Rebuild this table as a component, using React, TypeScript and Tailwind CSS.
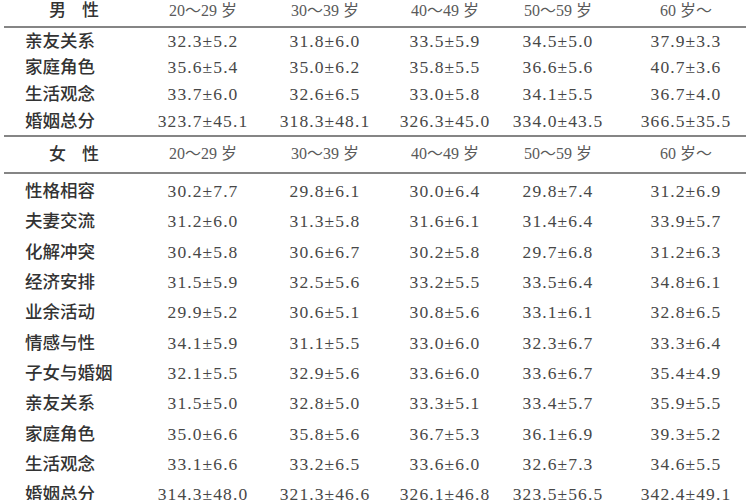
const ages = ["20～29 岁", "30～39 岁", "40～49 岁", "50～59 岁", "60 岁～"];

const male: [string, string[]][] = [
  ["亲友关系", ["32.3±5.2", "31.8±6.0", "33.5±5.9", "34.5±5.0", "37.9±3.3"]],
  ["家庭角色", ["35.6±5.4", "35.0±6.2", "35.8±5.5", "36.6±5.6", "40.7±3.6"]],
  ["生活观念", ["33.7±6.0", "32.6±6.5", "33.0±5.8", "34.1±5.5", "36.7±4.0"]],
  ["婚姻总分", ["323.7±45.1", "318.3±48.1", "326.3±45.0", "334.0±43.5", "366.5±35.5"]],
];

const female: [string, string[]][] = [
  ["性格相容", ["30.2±7.7", "29.8±6.1", "30.0±6.4", "29.8±7.4", "31.2±6.9"]],
  ["夫妻交流", ["31.2±6.0", "31.3±5.8", "31.6±6.1", "31.4±6.4", "33.9±5.7"]],
  ["化解冲突", ["30.4±5.8", "30.6±6.7", "30.2±5.8", "29.7±6.8", "31.2±6.3"]],
  ["经济安排", ["31.5±5.9", "32.5±5.6", "33.2±5.5", "33.5±6.4", "34.8±6.1"]],
  ["业余活动", ["29.9±5.2", "30.6±5.1", "30.8±5.6", "33.1±6.1", "32.8±6.5"]],
  ["情感与性", ["34.1±5.9", "31.1±5.5", "33.0±6.0", "32.3±6.7", "33.3±6.4"]],
  ["子女与婚姻", ["32.1±5.5", "32.9±5.6", "33.6±6.0", "33.6±6.7", "35.4±4.9"]],
  ["亲友关系", ["31.5±5.0", "32.8±5.0", "33.3±5.1", "33.4±5.7", "35.9±5.5"]],
  ["家庭角色", ["35.0±6.6", "35.8±5.6", "36.7±5.3", "36.1±6.9", "39.3±5.2"]],
  ["生活观念", ["33.1±6.6", "33.2±6.5", "33.6±6.0", "32.6±7.3", "34.6±5.5"]],
  ["婚姻总分", ["314.3±48.0", "321.3±46.6", "326.1±46.8", "323.5±56.5", "342.4±49.1"]],
];

const grid = "grid grid-cols-[142px_122px_122px_118px_108px_148px] items-center";

function Rule() {
  return <div className="mx-[4px] h-[2px] bg-[#858585]" />;
}

function Header({ sex, h }: { sex: [string, string]; h: string }) {
  return (
    <div className={`${grid} ${h}`}>
      <div className="flex gap-[16px] pl-[49px] text-[17px] font-medium text-[#333]">
        <span>{sex[0]}</span>
        <span>{sex[1]}</span>
      </div>
      {ages.map((a) => (
        <div key={a} className="text-center text-[16px] text-[#5a5a5a]">
          {a}
        </div>
      ))}
    </div>
  );
}

function Row({ label, vals, h }: { label: string; vals: string[]; h: string }) {
  return (
    <div className={`${grid} ${h}`}>
      <div className="pl-[25px] text-[17.5px] font-medium text-[#333]">{label}</div>
      {vals.map((v, i) => (
        <div key={i} className="text-center text-[17.5px] tracking-[1.1px] text-[#474747]">
          {v}
        </div>
      ))}
    </div>
  );
}

export default function App() {
  return (
    <div className="h-[500px] w-[750px] overflow-hidden bg-white font-['Liberation_Serif','Noto_Sans_CJK_SC',serif] leading-none">
      <Header sex={["男", "性"]} h="h-[21px]" />
      <div className="h-[5px]" />
      <Rule />
      {male.map(([l, v], i) => (
        <Row key={i} label={l} vals={v} h="h-[26.7px]" />
      ))}
      <Rule />
      <Header sex={["女", "性"]} h="h-[35px]" />
      <Rule />
      <div className="h-[3px]" />
      {female.map(([l, v], i) => (
        <Row key={i} label={l} vals={v} h="h-[30.3px]" />
      ))}
    </div>
  );
}
